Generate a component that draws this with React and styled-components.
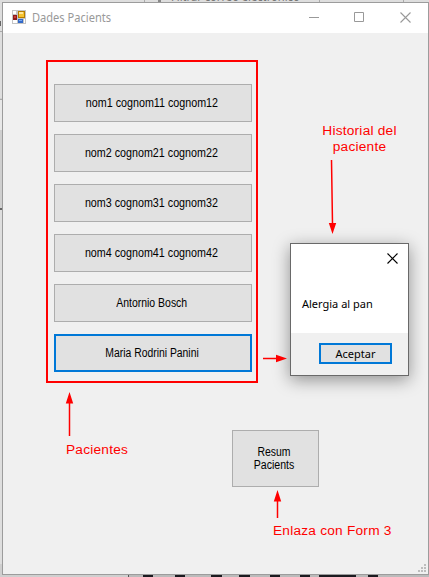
import React from "react";
import styled, { createGlobalStyle } from "styled-components";

const Global = createGlobalStyle`
  * { box-sizing: border-box; }
  body { margin: 0; overflow: hidden; font-family: "Liberation Sans", Arial, sans-serif; }
`;

const Desktop = styled.div`
  position: relative;
  width: 429px;
  height: 577px;
  padding: 2px 0 0 2px;
  overflow: hidden;
  background: #cfcfcf;
`;

const Backdrop = styled.svg`
  position: absolute;
  inset: 0;
`;

const BackdropText = styled.span`
  position: absolute;
  left: 171px;
  top: -11px;
  font: 400 12px/16px "Noto Sans", sans-serif;
  color: #777;
  white-space: nowrap;
  transform: scaleX(0.93);
  transform-origin: left;
`;

const Window = styled.main`
  position: relative;
  display: flex;
  flex-direction: column;
  width: 427px;
  height: 573px;
  border: 1px solid #9c9c9c;
  background: #f0f0f0;
`;

const TitleBar = styled.header`
  display: flex;
  align-items: center;
  height: 30px;
  padding: 0 17px 2px 9px;
  background: #fff;

  svg { display: block; }
`;

const Title = styled.h1`
  flex: 1;
  margin: 2px 0 0 6px;
  font: 400 12px/16px "Noto Sans", sans-serif;
  color: #999;
`;

const Controls = styled.div`
  display: flex;
  gap: 35px;
  padding-top: 1px;
`;

const Condensed = styled.span`
  display: inline-block;
  white-space: nowrap;
  transform: scaleX(${(p) => p.$scale});
  transform-origin: ${(p) => p.$origin || "center"};
`;

const Client = styled.div`
  display: grid;
  grid-template-columns: 212px 1fr;
  grid-template-rows: 323px 1fr;
  flex: 1;
  padding: 27px 0 0 43px;
`;

const PatientList = styled.section`
  display: flex;
  flex-direction: column;
  gap: 12px;
  padding: 22px 4px 0 6px;
  border: 2px solid #f00;
`;

const Button = styled.button`
  display: flex;
  flex-direction: column;
  align-items: center;
  justify-content: center;
  width: 198px;
  height: 38px;
  padding: ${(p) => (p.$focused ? "0 2px 0 0" : "0 3px 0 0")};
  border: ${(p) => (p.$focused ? "2px solid #0078d7" : "1px solid #adadad")};
  background: #e1e1e1;
  color: #000;
  font: 400 12px/13px "Liberation Sans", sans-serif;
`;

const ResumeButton = styled(Button)`
  width: 87px;
  height: 57px;
  padding: 0 2px 0 0;
`;

const AcceptButton = styled(Button)`
  width: 73px;
  height: 21px;
  padding: 0;
  font: 400 11px/15px "Noto Sans", sans-serif;
`;

const Side = styled.section`
  display: flex;
  flex-direction: column;
  padding: 63px 0 0 32px;
`;

const Note = styled.p`
  margin: 0;
  color: #f00;
  font-size: 13.7px;
  line-height: 16px;
  letter-spacing: 0.22px;
`;

const HistoryNote = styled(Note)`
  padding-left: 1px;
  text-align: center;
`;

const Dialog = styled.div`
  display: flex;
  flex-direction: column;
  width: 119px;
  height: 133px;
  margin-top: 88px;
  border: 1px solid #696969;
  background: #fff;
  box-shadow: 0 4px 16px rgba(0, 0, 0, 0.4);
`;

const DialogHead = styled.div`
  display: flex;
  justify-content: flex-end;
  height: 50px;
  padding: 9px 10px 0;
`;

const Message = styled.p`
  flex: 1;
  margin: 0;
  padding-left: 11px;
  font: 400 11px/20px "Noto Sans", sans-serif;
`;

const DialogFoot = styled.div`
  display: flex;
  justify-content: flex-end;
  height: 42px;
  padding: 10px 16px 0 0;
  background: #f0f0f0;
`;

const Bottom = styled.section`
  grid-column: 1 / -1;
  padding: 47px 0 0 20px;
`;

const BottomRow = styled.div`
  display: grid;
  grid-template-columns: 166px 1fr;
`;

const PatientsNote = styled(Note)`
  padding-top: 12px;
`;

const FormNote = styled(Note)`
  padding: 36px 0 0 207px;
`;

const Arrows = styled.svg`
  position: absolute;
  inset: 0;
  pointer-events: none;
`;

const Grip = styled.svg`
  position: absolute;
  right: 2px;
  bottom: 2px;
`;

const patients = [
  { name: "nom1 cognom11 cognom12", scale: 0.894 },
  { name: "nom2 cognom21 cognom22", scale: 0.894 },
  { name: "nom3 cognom31 cognom32", scale: 0.894 },
  { name: "nom4 cognom41 cognom42", scale: 0.894 },
  { name: "Antornio Bosch", scale: 0.872 },
  { name: "Maria Rodrini Panini", scale: 0.865, focused: true },
];

function Cross({ color }) {
  return (
    <svg width="11" height="11" fill="none" stroke={color} strokeWidth="1.1">
      <path d="M.5.5l10 10M10.5.5l-10 10" />
    </svg>
  );
}

function AppIcon() {
  return (
    <svg width="14" height="14" shapeRendering="crispEdges">
      <path fill="#c4c4c4" d="M0 0h14v14H0z" />
      <path fill="#fff" d="M1 1h3v3H1zM1 10h4v3H1zM12 9h1v4h-1z" />
      <path fill="#8e1b1b" d="M1 5h4v5H1z" />
      <path fill="#c83c35" d="M2 6h2v2H2z" />
      <path fill="#b67c00" d="M6 1h7v7H6z" />
      <path fill="#f6c331" d="M7 2h5v5H7z" />
      <path fill="#ffe69a" d="M7 2h4v2H7z" />
      <path fill="#3269c9" d="M6 9h5v4H6z" />
      <path fill="#78a8f1" d="M7 10h3v1H7z" />
    </svg>
  );
}

export default function App() {
  return (
    <>
      <Global />
      <Desktop>
        <Backdrop width="429" height="577">
          <path fill="#dedede" d="M0 0h429v2H0zM0 2h2v96H0zM0 210h2v354H0z" />
          <path fill="#e8e8e8" d="M0 100h2v30H0z" />
          <path fill="#aaa" d="M0 31h2v1H0zM0 99h2v1H0zM144 0h1v2h-1zM319 0h1v2h-1zM403 0h1v2h-1z" />
          <path fill="#666" d="M0 208h2v2H0zM0 21h1v5H0z" />
          <path fill="#888" d="M158 0h3v2h-3z" />
          <path fill="#bbb" d="M129 575h300v2H129z" />
          <path fill="#555" d="M128 575h1v2h-1z" />
          <path fill="#1b1b20" d="M143 575h10v2h-10zM175 575h10v2h-10zM211 575h11v2h-11zM239 575h11v2h-11zM270 575h10v2h-10zM300 575h10v2h-10zM319 575h37v2h-37zM368 575h10v2h-10z" />
        </Backdrop>
        <BackdropText>Filtrar correo electrónico</BackdropText>
        <Window>
          <TitleBar>
            <AppIcon />
            <Title><Condensed $scale={0.923} $origin="left">Dades Pacients</Condensed></Title>
            <Controls>
              <svg width="11" height="11"><path d="M1 5.5h10" stroke="#999" /></svg>
              <svg width="11" height="11"><path d="M.5.5h9v9h-9z" fill="none" stroke="#999" /></svg>
              <Cross color="#999" />
            </Controls>
          </TitleBar>
          <Client>
            <PatientList>
              {patients.map(({ name, scale, focused }) => (
                <Button key={name} $focused={focused}>
                  <Condensed $scale={scale}>{name}</Condensed>
                </Button>
              ))}
            </PatientList>
            <Side>
              <HistoryNote>Historial del<br />paciente</HistoryNote>
              <Dialog role="dialog">
                <DialogHead><Cross color="#000" /></DialogHead>
                <Message>Alergia al pan</Message>
                <DialogFoot>
                  <AcceptButton $focused>Aceptar</AcceptButton>
                </DialogFoot>
              </Dialog>
            </Side>
            <Bottom>
              <BottomRow>
                <PatientsNote>Pacientes</PatientsNote>
                <ResumeButton>
                  <Condensed $scale={0.87}>Resum</Condensed>
                  <Condensed $scale={0.88}>Pacients</Condensed>
                </ResumeButton>
              </BottomRow>
              <FormNote>Enlaza con Form 3</FormNote>
            </Bottom>
          </Client>
          <Grip width="8" height="8" fill="#bdbdbd">
            <path d="M6 0h2v2H6zM3 3h2v2H3zM6 3h2v2H6zM0 6h2v2H0zM3 6h2v2H3zM6 6h2v2H6z" />
          </Grip>
        </Window>
        <Arrows width="429" height="577" fill="#f00" stroke="#f00" strokeWidth="1.5">
          <path d="M331.5 160L332.5 224M263 358.5h14M69.5 403v33M277.5 501v17" />
          <path stroke="none" d="M328.8 223h7.4l-3.7 11zM276 354.8v7.4l11-3.7zM65.8 403.5h7.4L69.5 392zM273.8 501.5h7.4L277.5 490z" />
        </Arrows>
      </Desktop>
    </>
  );
}
